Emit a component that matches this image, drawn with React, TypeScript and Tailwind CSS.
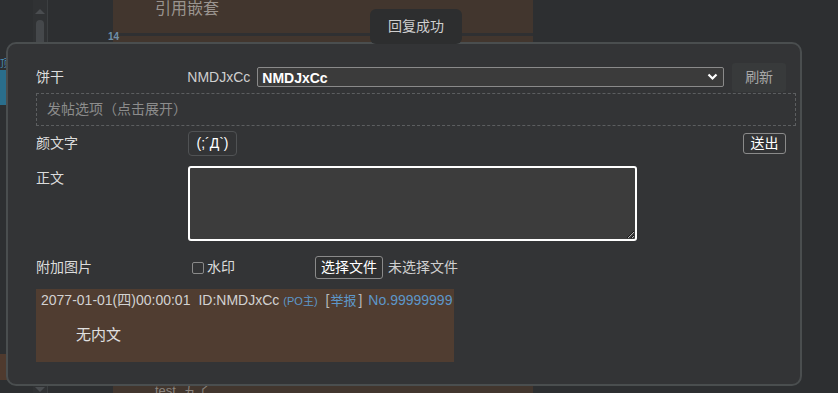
import React from "react";

const F = { fontFamily: '"Liberation Sans", "Noto Sans CJK SC", sans-serif' } as React.CSSProperties;

export default function App() {
  return (
    <div className="relative w-[838px] h-[393px] overflow-hidden bg-[#2d2f31] text-[14px]" style={F}>
      {/* background page */}
      <div className="absolute inset-0 flex">
        <div className="w-[33px] h-full flex flex-col">
          <div className="h-[58px]" />
          <div className="h-[12px] w-[6px] text-[10px] text-[#4a90b8] overflow-hidden leading-[12px]">顶</div>
          <div className="h-[35px] w-[7px] bg-[#2a6e8c]" />
          <div className="flex-1" />
          <div className="h-[26px] w-[7px] bg-[#4f3a2e]" />
          <div className="h-[13px]" />
        </div>
        <div className="w-[14px] h-full bg-[#303234] flex flex-col items-center pt-[9px]">
          <div className="w-0 h-0 border-l-[5px] border-r-[5px] border-b-[5px] border-l-transparent border-r-transparent border-b-[#4a4d50]" />
          <div className="mt-[6px] w-[8px] h-[30px] rounded-full bg-[#45484b]" />
          <div className="flex-1" />
          <div className="w-0 h-0 border-l-[5px] border-r-[5px] border-t-[5px] border-l-transparent border-r-transparent border-t-[#4a4d50] mb-[1px]" />
        </div>
        <div className="w-[1px] h-full bg-[#3c3f41]" />
        <div className="w-[65px] h-full relative">
          <div className="absolute left-[60px] top-[29px] text-[10px] font-bold text-[#6f8fa8]">14</div>
        </div>
        <div className="w-[420px] h-full flex flex-col">
          <div className="h-[33px] bg-[#42362e] pl-[42px] text-[16px] text-[#9a948f] leading-[18px]">
            <div>引用嵌套</div>
          </div>
          <div className="h-[3px] bg-[#2f3032]" />
          <div className="h-[8px] bg-[#42362e]" />
          <div className="flex-1" />
          <div className="h-[8px] bg-[#42362e] pl-[42px] text-[13px] leading-[8px] text-[#8a847f] overflow-hidden">
            <div className="mt-[2px]">test. 五了</div>
          </div>
        </div>
      </div>

      {/* modal */}
      <div className="absolute left-[6px] top-[42px] w-[796px] h-[344px] rounded-[10px] border-2 border-[#4a4e4f] bg-[#333436] pl-[28px] pr-[4px] pt-[19px] text-[#dcdcdc]">
        {/* cookie row */}
        <div className="flex items-center h-[29px] pr-[10px]">
          <div className="w-[152px]">饼干</div>
          <div className="text-[#cfcfcf]">NMDJxCc</div>
          <div className="relative ml-[7px]">
            <select
              className="appearance-none w-[467px] h-[20px] bg-[#3b3b3b] border border-[#8a8a8a] rounded-[2px] pl-[4px] text-[14px] font-bold text-white outline-none"
              style={F}
              defaultValue="NMDJxCc"
            >
              <option>NMDJxCc</option>
            </select>
            <svg className="absolute right-[6px] top-[6px] pointer-events-none" width="11" height="8" viewBox="0 0 11 8">
              <path d="M1.5 1.5 L5.5 5.5 L9.5 1.5" stroke="#fff" strokeWidth="2.2" fill="none" />
            </svg>
          </div>
          <button className="ml-[8px] w-[54px] h-[29px] rounded-[3px] bg-[#383a3b] text-[#a8a8a8]">刷新</button>
        </div>
        {/* post options */}
        <div className="mt-[1px] h-[33px] border border-dashed border-[#5c5e60] pl-[10px] flex items-center text-[#8c8c8c]">
          发帖选项（点击展开）
        </div>
        {/* kaomoji */}
        <div className="mt-[5px] flex items-center h-[25px] pr-[10px]">
          <div className="w-[152px]">颜文字</div>
          <button className="w-[49px] h-[25px] rounded-[4px] border border-[#505254] text-white text-[14px]">(;´Д`)</button>
          <button className="ml-auto w-[43px] h-[21px] rounded-[3px] border border-[#8a8a8a] text-white leading-[19px]">送出</button>
        </div>
        {/* body */}
        <div className="mt-[10px] flex">
          <div className="w-[152px] pt-[2px]">正文</div>
          <textarea className="w-[449px] h-[75px] rounded-[3px] border-2 border-white bg-[#3c3c3c] outline-none" />
        </div>
        {/* image */}
        <div className="mt-[15px] flex items-center h-[23px]">
          <div className="w-[152px]">附加图片</div>
          <span className="ml-[4px] w-[12px] h-[12px] rounded-[2px] border border-[#8a8a8a]" />
          <span className="ml-[3px]">水印</span>
          <button className="ml-[80px] w-[68px] h-[23px] rounded-[3px] border border-[#8a8a8a] bg-[#2f3031] text-white">选择文件</button>
          <span className="ml-[5px] text-[#cfcfcf]">未选择文件</span>
        </div>
        {/* preview */}
        <div className="mt-[10px] w-[418px] h-[73px] bg-[#503d31] pl-[5px] pt-[2px] overflow-hidden">
          <div className="whitespace-nowrap text-[#d2d2d2] leading-[18px]">
            <span>2077-01-01(四)00:00:01</span>
            <span className="ml-[8px]">ID:NMDJxCc</span>
            <span className="ml-[4px] text-[11px] text-[#5d97c9]">(PO主)</span>
            <span className="ml-[8px] text-[#b8b8b8]">[</span>
            <span className="text-[#5d97c9] text-[13px] ml-[1px]">举报</span>
            <span className="ml-[2px] text-[#b8b8b8]">]</span>
            <span className="ml-[6px] text-[#5d97c9]">No.99999999</span>
          </div>
          <div className="mt-[14px] ml-[35px] text-[15px] text-[#e0e0e0]">无内文</div>
        </div>
      </div>

      {/* toast */}
      <div className="absolute left-[370px] top-[9px] w-[92px] h-[35px] rounded-[6px] bg-[#2d2e2f] flex items-center justify-center text-[#cfcfcf] text-[14px]">
        回复成功
      </div>
    </div>
  );
}
